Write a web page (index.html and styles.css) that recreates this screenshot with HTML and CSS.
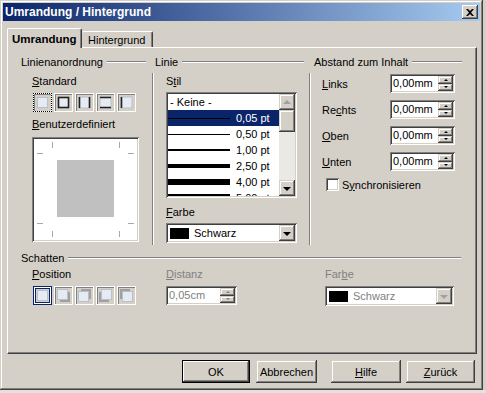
FILE: index.html
```html
<!DOCTYPE html>
<html lang="de">
<head>
    <meta charset="UTF-8">
    <title>Umrandung / Hintergrund</title>
    <link rel="stylesheet" href="styles.css">
</head>
<body>
<div class="window">
    <div class="titlebar">
        <span class="title">Umrandung / Hintergrund</span>
        <span class="close">
            <svg width="8" height="7" viewBox="0 0 8 7"><path d="M0 0h2l2 2 2-2h2L5 3.5 8 7H6L4 5 2 7H0l3-3.5z" fill="#000"/></svg>
        </span>
    </div>

    <div class="tabs">
        <div class="tab active">Umrandung</div>
        <div class="tab">Hintergrund</div>
    </div>

    <div class="panel">
        <div class="top">
            <!-- Linienanordnung -->
            <div class="group g1">
                <div class="ghead"><span>Linienanordnung</span><i class="rule"></i></div>
                <div class="gbody">
                    <div class="lbl"><u>S</u>tandard</div>
                    <div class="presets">
                        <span class="tile focus"><svg width="15" height="15"><rect x="2.5" y="2.5" width="10" height="10" fill="#e6ebf3" stroke="#b8c0cc"/></svg></span>
                        <span class="tile"><svg width="15" height="15"><rect x="2" y="2" width="11" height="11" fill="#e6ebf3"/><rect x="2.5" y="2.5" width="10" height="10" fill="none" stroke="#202020" stroke-width="1.6"/></svg></span>
                        <span class="tile"><svg width="15" height="15"><rect x="2" y="2" width="11" height="11" fill="#e6ebf3" stroke="#b8c0cc"/><path d="M2.5 2v11M12.5 2v11" stroke="#202020" stroke-width="1.6"/></svg></span>
                        <span class="tile"><svg width="15" height="15"><rect x="2" y="2" width="11" height="11" fill="#e6ebf3" stroke="#b8c0cc"/><path d="M2 2.5h11M2 12.5h11" stroke="#202020" stroke-width="1.6"/></svg></span>
                        <span class="tile"><svg width="15" height="15"><rect x="2" y="2" width="11" height="11" fill="#e6ebf3" stroke="#b8c0cc"/><path d="M2.5 2v11" stroke="#202020" stroke-width="1.6"/></svg></span>
                    </div>
                    <div class="lbl"><u>B</u>enutzerdefiniert</div>
                    <div class="preview">
                        <svg width="103" height="101">
                            <rect x="23" y="21" width="57" height="57" fill="#c0c0c0"/>
                            <g stroke="#a8a8a8" stroke-width="1">
                                <path d="M18.5 3v6M85.5 3v6M18.5 92v6M85.5 92v6"/>
                                <path d="M3 14.5h6M94 14.5h6M3 84.5h6M94 84.5h6"/>
                            </g>
                        </svg>
                    </div>
                </div>
            </div>

            <!-- Linie -->
            <div class="group g2">
                <div class="ghead"><span>Linie</span><i class="rule"></i></div>
                <div class="gbody vline">
                    <div class="lbl">S<u>t</u>il</div>
                    <div class="listbox">
                        <div class="rows">
                            <div class="row"><span class="none">- Keine -</span></div>
                            <div class="row sel"><span class="sample w1"></span><span class="pt">0,05 pt</span></div>
                            <div class="row"><span class="sample w1"></span><span class="pt">0,50 pt</span></div>
                            <div class="row"><span class="sample w2"></span><span class="pt">1,00 pt</span></div>
                            <div class="row"><span class="sample w4"></span><span class="pt">2,50 pt</span></div>
                            <div class="row"><span class="sample w6"></span><span class="pt">4,00 pt</span></div>
                            <div class="row"><span class="sample w8"></span><span class="pt">5,00 pt</span></div>
                        </div>
                        <div class="scrollbar">
                            <span class="sbtn"><i class="arr up grey"></i></span>
                            <span class="thumb"></span>
                            <span class="track"></span>
                            <span class="sbtn"><i class="arr down"></i></span>
                        </div>
                    </div>
                    <div class="lbl gap7"><u>F</u>arbe</div>
                    <div class="combo">
                        <span class="swatch"></span><span class="ctext">Schwarz</span>
                        <span class="dbtn"><i class="arr down"></i></span>
                    </div>
                </div>
            </div>

            <!-- Abstand zum Inhalt -->
            <div class="group g3">
                <div class="ghead"><span>Abstand zum Inhalt</span><i class="rule"></i></div>
                <div class="gbody vline">
                    <div class="frow"><span class="flbl"><u>L</u>inks</span><div class="spin"><span class="val">0,00mm</span><span class="sbtns"><span class="half"><i class="tri up"></i></span><span class="half"><i class="tri down"></i></span></span></div></div>
                    <div class="frow"><span class="flbl">Re<u>c</u>hts</span><div class="spin"><span class="val">0,00mm</span><span class="sbtns"><span class="half"><i class="tri up"></i></span><span class="half"><i class="tri down"></i></span></span></div></div>
                    <div class="frow"><span class="flbl"><u>O</u>ben</span><div class="spin"><span class="val">0,00mm</span><span class="sbtns"><span class="half"><i class="tri up"></i></span><span class="half"><i class="tri down"></i></span></span></div></div>
                    <div class="frow"><span class="flbl"><u>U</u>nten</span><div class="spin"><span class="val">0,00mm</span><span class="sbtns"><span class="half"><i class="tri up"></i></span><span class="half"><i class="tri down"></i></span></span></div></div>
                    <div class="check"><span class="box"></span><span>S<u>y</u>nchronisieren</span></div>
                </div>
            </div>
        </div>

        <!-- Schatten -->
        <div class="shadowsec">
            <div class="ghead"><span>Schatten</span><i class="rule"></i></div>
            <div class="srow">
                <div class="scol c1">
                    <div class="lbl"><u>P</u>osition</div>
                    <div class="presets">
                        <span class="tile chosen"><svg width="15" height="15"><rect x="2.5" y="2.5" width="10" height="10" fill="#e6ebf3" stroke="#b8c0cc"/></svg></span>
                        <span class="tile"><svg width="15" height="15"><rect x="4" y="4" width="10" height="10" fill="#a0a0a0"/><rect x="1.5" y="1.5" width="10" height="10" fill="#e6ebf3" stroke="#b8c0cc"/></svg></span>
                        <span class="tile"><svg width="15" height="15"><rect x="4" y="1" width="10" height="10" fill="#a0a0a0"/><rect x="1.5" y="3.5" width="10" height="10" fill="#e6ebf3" stroke="#b8c0cc"/></svg></span>
                        <span class="tile"><svg width="15" height="15"><rect x="1" y="4" width="10" height="10" fill="#a0a0a0"/><rect x="3.5" y="1.5" width="10" height="10" fill="#e6ebf3" stroke="#b8c0cc"/></svg></span>
                        <span class="tile"><svg width="15" height="15"><rect x="1" y="1" width="10" height="10" fill="#a0a0a0"/><rect x="3.5" y="3.5" width="10" height="10" fill="#e6ebf3" stroke="#b8c0cc"/></svg></span>
                    </div>
                </div>
                <div class="scol c2">
                    <div class="lbl dis"><u>D</u>istanz</div>
                    <div class="spin small dis"><span class="val">0,05cm</span><span class="sbtns"><span class="half"><i class="tri up"></i></span><span class="half"><i class="tri down"></i></span></span></div>
                </div>
                <div class="scol c3">
                    <div class="lbl dis">Far<u>b</u>e</div>
                    <div class="combo wide dis">
                        <span class="swatch"></span><span class="ctext">Schwarz</span>
                        <span class="dbtn"><i class="arr down grey"></i></span>
                    </div>
                </div>
            </div>
        </div>
    </div>

    <div class="buttons">
        <button class="btn ok">OK</button>
        <button class="btn abbr">Abbrechen</button>
        <button class="btn hilfe"><u>H</u>ilfe</button>
        <button class="btn zur"><u>Z</u>urück</button>
    </div>
</div>
<div class="under"></div>
</body>
</html>
```

FILE: styles.css
```css
body {
    margin: 0;
    width: 486px;
    height: 393px;
    overflow: hidden;
    background: #d4d0c8;
    font-family: "Liberation Sans", Arial, sans-serif;
    font-size: 11px;
    color: #000;
}
u {
    text-decoration: underline;
    text-underline-offset: 1px;
}

/* window frame */
.window {
    width: 483px;
    height: 390px;
    box-sizing: border-box;
    padding: 3px;
    background: #d4d0c8;
    box-shadow: inset -1px -1px #404040, inset 1px 1px #d4d0c8, inset -2px -2px #808080, inset 2px 2px #fff;
}
.titlebar {
    height: 18px;
    display: flex;
    align-items: center;
    justify-content: space-between;
    background: linear-gradient(to right, #0a246a, #a6caf0);
    padding: 0 2px 0 2px;
}
.title {
    color: #fff;
    font-weight: bold;
    font-size: 12px;
}
.close {
    width: 16px;
    height: 14px;
    box-sizing: border-box;
    display: flex;
    align-items: center;
    justify-content: center;
    background: #d4d0c8;
    box-shadow: inset -1px -1px #404040, inset 1px 1px #fff, inset -2px -2px #808080, inset 2px 2px #d4d0c8;
}

/* tabs */
.tabs {
    display: flex;
    align-items: flex-end;
    height: 19px;
    margin: 7px 0 0 4px;
    position: relative;
    z-index: 1;
}
.tab {
    height: 16px;
    box-sizing: border-box;
    padding: 1px 7px 0 6px;
    line-height: 14px;
    white-space: nowrap;
    border-top: 1px solid #fff;
    border-left: 1px solid #fff;
    border-right: 1px solid #404040;
    box-shadow: inset -1px 0 #808080;
    border-radius: 2px 2px 0 0;
    background: #d4d0c8;
}
.tab.active {
    height: 20px;
    margin-bottom: -1px;
    width: 75px;
    padding: 3px 0 0 4px;
    font-weight: bold;
    font-size: 11.5px;
}
.tab:not(.active) {
    width: 71px;
    border-left: none;
    padding-left: 6px;
}

/* panel */
.panel {
    width: 470px;
    height: 307px;
    margin-left: 4px;
    box-sizing: border-box;
    border-top: 1px solid #fff;
    border-left: 1px solid #fff;
    border-right: 1px solid #404040;
    border-bottom: 1px solid #404040;
    box-shadow: inset -1px -1px #808080;
    padding-top: 7px;
}
.top {
    display: flex;
    margin-left: 13px;
}
.ghead {
    display: flex;
    align-items: center;
    height: 14px;
    line-height: 14px;
}
.rule {
    flex: 1;
    height: 0;
    border-top: 1px solid #808080;
    border-bottom: 1px solid #fff;
    margin-left: 4px;
}
.g1 { width: 131px; }
.g1 .rule { margin-right: 6px; }
.g2 { width: 157px; }
.g2 .ghead { padding-left: 3px; }
.g2 .rule { margin-right: 5px; }
.g3 { width: 153px; }
.g3 .ghead { padding-left: 5px; }

.gbody {
    padding-left: 11px;
}
.gbody.vline {
    margin-top: 4px;
    height: 172px;
    box-sizing: border-box;
    border-left: 1px solid #808080;
    box-shadow: inset 1px 0 #fff;
    padding-top: 1px;
}
.g2 .gbody { padding-left: 13px; }
.g3 .gbody { padding-left: 12px; }

.lbl {
    height: 14px;
    line-height: 14px;
    margin-top: 5px;
}
.g2 .lbl:first-child { margin-top: 0; }
.lbl.gap7 { margin-top: 7px; }
.lbl.dis, .dis .ctext, .dis .val { color: #808080; }

/* preset tiles */
.presets {
    display: flex;
    gap: 2px;
    margin-top: 5px;
    margin-left: 1px;
}
.tile {
    width: 19px;
    height: 19px;
    box-sizing: border-box;
    display: flex;
    align-items: center;
    justify-content: center;
    background: #d4d0c8;
    box-shadow: inset 1px 1px #fff, inset -1px -1px #fff, inset 2px 2px #808080, inset -2px -2px #d4d0c8;
}
.tile.focus {
    outline: 1px dotted #000;
    outline-offset: -1px;
}
.tile.chosen {
    box-shadow: inset 0 0 0 1px #0a246a, inset 0 0 0 2px #fff, inset 0 0 0 3px #0a246a;
}

.preview {
    margin-top: 6px;
    width: 107px;
    height: 105px;
    box-sizing: border-box;
    padding: 2px;
    background: #fff;
    box-shadow: inset 1px 1px #808080, inset -1px -1px #fff, inset 2px 2px #404040, inset -2px -2px #d4d0c8;
}
.preview svg { display: block; }

/* list box */
.listbox {
    margin-top: 4px;
    width: 131px;
    height: 106px;
    box-sizing: border-box;
    padding: 2px;
    display: flex;
    background: #fff;
    box-shadow: inset 1px 1px #808080, inset -1px -1px #fff, inset 2px 2px #404040, inset -2px -2px #d4d0c8;
}
.rows {
    flex: 1;
    overflow: hidden;
}
.row {
    height: 16px;
    display: flex;
    align-items: center;
}
.row .none { padding-left: 2px; }
.row.sel {
    background: #0a246a;
    color: #fff;
}
.sample {
    width: 62px;
    background: #000;
}
.w1 { height: 1px; }
.w2 { height: 2px; }
.w4 { height: 4px; }
.w6 { height: 6px; }
.w8 { height: 8px; }
.pt { margin-left: 6px; }

.scrollbar {
    width: 16px;
    display: flex;
    flex-direction: column;
    background: #ebe9e4;
}
.sbtn, .thumb, .dbtn, .btn, .half {
    background: #d4d0c8;
    box-shadow: inset -1px -1px #404040, inset 1px 1px #d4d0c8, inset -2px -2px #808080, inset 2px 2px #fff;
}
.sbtn {
    height: 16px;
    display: flex;
    align-items: center;
    justify-content: center;
}
.thumb { height: 22px; }
.track { flex: 1; }

.arr {
    width: 0;
    height: 0;
    border-left: 4px solid transparent;
    border-right: 4px solid transparent;
}
.arr.down { border-top: 4px solid #000; margin-top: 1px; }
.arr.up { border-bottom: 4px solid #000; margin-top: -1px; }
.arr.up.grey { border-bottom-color: #a0a0a0; }
.arr.down.grey { border-top-color: #a0a0a0; }

/* combo box */
.combo {
    margin-top: 4px;
    width: 131px;
    height: 20px;
    box-sizing: border-box;
    padding: 2px;
    display: flex;
    align-items: center;
    background: #fff;
    box-shadow: inset 1px 1px #808080, inset -1px -1px #fff, inset 2px 2px #404040, inset -2px -2px #d4d0c8;
}
.combo.wide { width: 129px; margin-top: 5px; }
.swatch {
    width: 19px;
    height: 11px;
    background: #000;
    margin-left: 2px;
}
.ctext {
    flex: 1;
    margin-left: 5px;
}
.dbtn {
    width: 16px;
    height: 16px;
    display: flex;
    align-items: center;
    justify-content: center;
}

/* spin fields */
.frow {
    display: flex;
    align-items: center;
    height: 19px;
    margin-bottom: 7px;
}
.flbl { width: 68px; }
.spin {
    width: 65px;
    height: 19px;
    box-sizing: border-box;
    padding: 2px;
    display: flex;
    background: #fff;
    box-shadow: inset 1px 1px #808080, inset -1px -1px #fff, inset 2px 2px #404040, inset -2px -2px #d4d0c8;
}
.spin.small { width: 71px; margin-top: 5px; }
.val {
    flex: 1;
    padding-left: 1px;
    line-height: 15px;
}
.sbtns {
    width: 15px;
    display: flex;
    flex-direction: column;
}
.half {
    flex: 1;
    display: flex;
    align-items: center;
    justify-content: center;
}
.tri {
    width: 0;
    height: 0;
    border-left: 2px solid transparent;
    border-right: 2px solid transparent;
}
.tri.up { border-bottom: 2px solid #000; }
.tri.down { border-top: 2px solid #000; }
.dis .tri.up { border-bottom-color: #808080; }
.dis .tri.down { border-top-color: #808080; }

.check {
    display: flex;
    align-items: center;
    gap: 3px;
    margin-left: 4px;
}
.box {
    width: 13px;
    height: 13px;
    box-sizing: border-box;
    background: #fff;
    box-shadow: inset 1px 1px #808080, inset -1px -1px #fff, inset 2px 2px #404040, inset -2px -2px #d4d0c8;
}

/* Schatten */
.shadowsec {
    margin: 6px 0 0 13px;
}
.shadowsec .ghead { width: 440px; }
.srow {
    display: flex;
}
.scol .lbl { margin-top: 2px; }
.scol.c1 { width: 134px; padding-left: 11px; }
.scol.c2 { width: 159px; }

/* dialog buttons */
.buttons {
    display: flex;
    justify-content: flex-end;
    margin: 6px 5px 0 0;
}
.btn {
    height: 23px;
    border: none;
    font-family: inherit;
    font-size: 11px;
    color: #000;
    padding: 0;
}
.ok { width: 68px; box-shadow: inset 0 0 0 1px #000, inset -2px -2px #404040, inset 2px 2px #fff, inset -3px -3px #808080; }
.abbr { width: 61px; margin-left: 6px; }
.hilfe { width: 70px; margin-left: 14px; }
.zur { width: 69px; margin-left: 5px; }

.under {
    height: 3px;
    background: #e4e2dc;
}
```
